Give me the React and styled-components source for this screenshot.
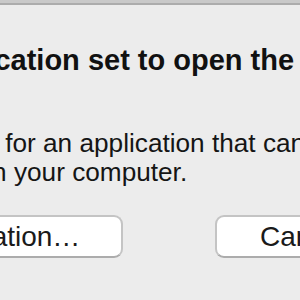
import styled, { createGlobalStyle } from 'styled-components';

const GlobalStyle = createGlobalStyle`
html, body {
  margin: 0;
  padding: 0;
  background: #ececec;
  overflow: hidden;
}
body {
  font-family: "Liberation Sans", Arial, sans-serif;
  color: #111;
}
`;

const App = () => {
  return (
    <Window>
      <GlobalStyle />
      <TitleBar />
      <Content>
        <Title>There is no application set to open the document “a.ai”.</Title>
        <Message>
          Search the App Store for an application that can open this document, or choose an existing application on your computer.
        </Message>
        <ButtonRow>
          <Button width="353px">Choose Application…</Button>
          <Group>
            <Button width="177px">Cancel</Button>
            <Button width="328px">Search App Store</Button>
          </Group>
        </ButtonRow>
      </Content>
    </Window>
  );
};

const Window = styled.div`
width: 300px;
height: 300px;
display: flex;
flex-direction: column;
background: #ececec;
`;

const TitleBar = styled.div`
height: 3px;
flex-shrink: 0;
background: #c9c9c9;
border-bottom: 2px solid #acacac;
`;

/* the dialog is wider than the frame; only its middle shows */
const Content = styled.div`
width: 983px;
margin-left: -251px;
padding-top: 38px;
display: flex;
flex-direction: column;
`;

const Title = styled.div`
max-width: 600px;
margin-left: 15px;
font-size: 29px;
font-weight: bold;
line-height: 34px;
color: #111;
`;

const Message = styled.div`
margin-top: 18px;
font-size: 26.2px;
line-height: 29px;
color: #151515;
`;

const ButtonRow = styled.div`
margin-top: 28px;
padding-left: 21px;
display: flex;
justify-content: space-between;
`;

const Group = styled.div`
display: flex;
gap: 12px;
`;

const Button = styled.button`
width: ${(p) => p.width};
height: 43px;
box-sizing: border-box;
background: #fff;
border: 2px solid #c4c4c4;
border-bottom-color: #acacac;
border-radius: 9px;
font-family: "Liberation Sans", Arial, sans-serif;
font-size: 28px;
line-height: 39px;
color: #1a1a1a;
text-align: center;
white-space: nowrap;
padding: 0;
`;

export default App;
